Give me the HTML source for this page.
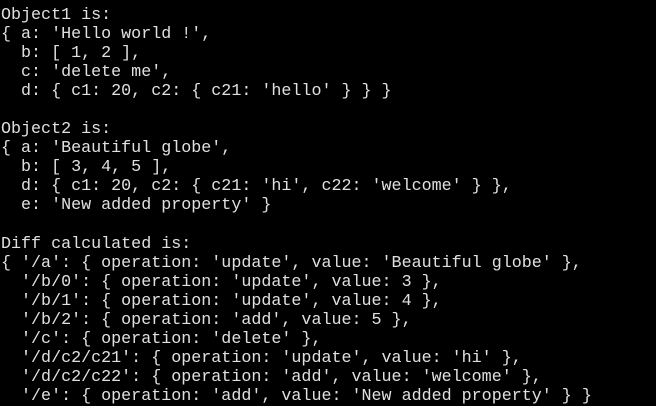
<!DOCTYPE html>
<html><head><meta charset="utf-8"><style>
html,body{margin:0;padding:0;background:#000;width:656px;height:406px;overflow:hidden}
pre{margin:0;padding:6px 0 0 1px;font-family:"Liberation Mono",monospace;font-size:16.7px;line-height:19.05px;color:#e0e0e0}
</style></head><body><pre>Object1 is:
{ a: 'Hello world !',
  b: [ 1, 2 ],
  c: 'delete me',
  d: { c1: 20, c2: { c21: 'hello' } } }

Object2 is:
{ a: 'Beautiful globe',
  b: [ 3, 4, 5 ],
  d: { c1: 20, c2: { c21: 'hi', c22: 'welcome' } },
  e: 'New added property' }

Diff calculated is:
{ '/a': { operation: 'update', value: 'Beautiful globe' },
  '/b/0': { operation: 'update', value: 3 },
  '/b/1': { operation: 'update', value: 4 },
  '/b/2': { operation: 'add', value: 5 },
  '/c': { operation: 'delete' },
  '/d/c2/c21': { operation: 'update', value: 'hi' },
  '/d/c2/c22': { operation: 'add', value: 'welcome' },
  '/e': { operation: 'add', value: 'New added property' } }</pre></body></html>
